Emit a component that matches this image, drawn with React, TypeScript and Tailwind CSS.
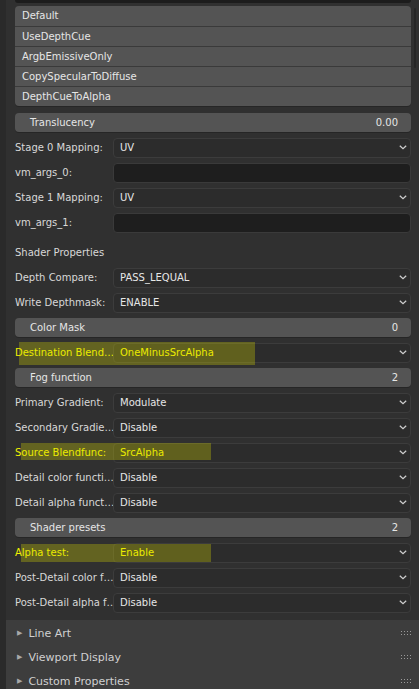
import React from 'react';

type Row =
  | { kind: 'dropdown'; label: string; value: string; hl?: string }
  | { kind: 'field'; label: string }
  | { kind: 'bar'; label: string; value: string }
  | { kind: 'heading'; label: string };

const flags = ['Default', 'UseDepthCue', 'ArgbEmissiveOnly', 'CopySpecularToDiffuse', 'DepthCueToAlpha'];

const rows: Row[] = [
  { kind: 'bar', label: 'Translucency', value: '0.00' },
  { kind: 'dropdown', label: 'Stage 0 Mapping:', value: 'UV' },
  { kind: 'field', label: 'vm_args_0:' },
  { kind: 'dropdown', label: 'Stage 1 Mapping:', value: 'UV' },
  { kind: 'field', label: 'vm_args_1:' },
  { kind: 'heading', label: 'Shader Properties' },
  { kind: 'dropdown', label: 'Depth Compare:', value: 'PASS_LEQUAL' },
  { kind: 'dropdown', label: 'Write Depthmask:', value: 'ENABLE' },
  { kind: 'bar', label: 'Color Mask', value: '0' },
  { kind: 'dropdown', label: 'Destination Blend…', value: 'OneMinusSrcAlpha', hl: 'dest' },
  { kind: 'bar', label: 'Fog function', value: '2' },
  { kind: 'dropdown', label: 'Primary Gradient:', value: 'Modulate' },
  { kind: 'dropdown', label: 'Secondary Gradie…', value: 'Disable' },
  { kind: 'dropdown', label: 'Source Blendfunc:', value: 'SrcAlpha', hl: 'src' },
  { kind: 'dropdown', label: 'Detail color functi…', value: 'Disable' },
  { kind: 'dropdown', label: 'Detail alpha funct…', value: 'Disable' },
  { kind: 'bar', label: 'Shader presets', value: '2' },
  { kind: 'dropdown', label: 'Alpha test:', value: 'Enable', hl: 'alpha' },
  { kind: 'dropdown', label: 'Post-Detail color f…', value: 'Disable' },
  { kind: 'dropdown', label: 'Post-Detail alpha f…', value: 'Disable' },
];

const subPanels = ['Line Art', 'Viewport Display', 'Custom Properties'];

const Chevron = () => (
  <svg width="8" height="5" viewBox="0 0 8 5" className="shrink-0">
    <path d="M0.8 0.8 L4 3.8 L7.2 0.8" fill="none" stroke="#d0d0d0" strokeWidth="1.2" />
  </svg>
);

const Grip = () => (
  <svg width="11" height="5" viewBox="0 0 11 5">
    {[0, 3, 6, 9].map((x) =>
      [0, 3].map((y) => <rect key={`${x}-${y}`} x={x} y={y} width="1" height="1" fill="#9a9a9a" />)
    )}
  </svg>
);

const Highlight = ({ kind }: { kind: string }) => {
  if (kind === 'dest')
    return <div className="pointer-events-none absolute left-[4px] top-[2px] h-[23px] w-[236px] bg-[rgba(220,220,0,0.3)]" />;
  if (kind === 'src')
    return <div className="pointer-events-none absolute left-[6px] top-[3px] h-[17px] w-[190px] bg-[rgba(220,220,0,0.3)]" />;
  return <div className="pointer-events-none absolute left-[6px] top-[4px] h-[18px] w-[190px] bg-[rgba(220,220,0,0.3)]" />;
};

const RowView = ({ row }: { row: Row }) => {
  if (row.kind === 'bar') {
    return (
      <div className="flex h-[25px] items-center">
        <div className="flex h-[19px] flex-1 items-center justify-between rounded-[4px] bg-[#545454] pl-[15px] pr-[13px] text-[#e6e6e6] shadow-[0_1px_0_#262626]">
          <span>{row.label}</span>
          <span>{row.value}</span>
        </div>
      </div>
    );
  }
  if (row.kind === 'heading') {
    return (
      <div className="mt-[5px] flex h-[25px] items-center text-[#d8d8d8]">
        <span>{row.label}</span>
      </div>
    );
  }
  const hl = row.kind === 'dropdown' ? row.hl : undefined;
  return (
    <div className="relative flex h-[25px] items-center">
      <div className={`w-[98px] shrink-0 whitespace-nowrap leading-[14px] ${hl ? 'text-[#f2f200]' : 'text-[#d8d8d8]'}`}>
        {row.label}
      </div>
      {row.kind === 'dropdown' ? (
        <div className="relative flex h-[20px] flex-1 items-center justify-between rounded-[4px] border border-[#3c3c3c] bg-[#2c2c2c] pl-[6px] pr-[3px]">
          <span className={hl ? 'text-[#f2f200]' : 'text-[#e6e6e6]'}>{row.value}</span>
          <Chevron />
        </div>
      ) : (
        <div className="relative h-[20px] flex-1 rounded-[4px] border border-[#3a3a3a] bg-[#1e1e1e]" />
      )}
      {hl && <Highlight kind={hl} />}
    </div>
  );
};

export default function App() {
  return (
    <div className="relative flex h-[689px] w-[419px] overflow-hidden bg-[#303030] font-['DejaVu_Sans',sans-serif] text-[10px] leading-none">
      <div className="w-[6px] shrink-0 bg-[#2a2a2a]" />
      <div className="flex flex-1 flex-col">
        <div className="pl-[9px] pr-[8px]">
          <div className="h-[3px] rounded-b-[3px] bg-[#1c1c1c]" />
          <div className="mt-[3px] overflow-hidden rounded-[4px] bg-[#545454] shadow-[0_1px_0_#262626]">
            {flags.map((f, i) => (
              <div
                key={f}
                className={`flex h-[20px] items-center pl-[7px] text-[#e6e6e6] ${i > 0 ? 'border-t border-[#3a3a3a]' : ''}`}
              >
                {f}
              </div>
            ))}
          </div>
          <div className="mt-[4px] flex flex-col">
            {rows.map((r, i) => (
              <RowView key={i} row={r} />
            ))}
          </div>
        </div>
        <div className="mt-[5px] flex flex-1 flex-col bg-[#3d3d3d] pt-[1px]">
          {subPanels.map((p) => (
            <div key={p} className="flex h-[24px] items-center pl-[11px] pr-[7px] text-[#d0d0d0]">
              <span className="mr-[6px] text-[7px] text-[#a8a8a8]">▶</span>
              <span className="flex-1 text-[11px]">{p}</span>
              <Grip />
            </div>
          ))}
        </div>
      </div>
      <div className="absolute right-[3px] top-[8px] h-[60px] w-[2px] rounded bg-[#262626]" />
    </div>
  );
}
